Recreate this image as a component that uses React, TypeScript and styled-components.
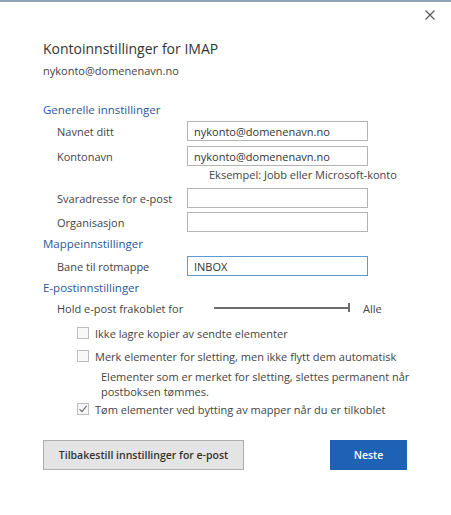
import { createGlobalStyle } from "styled-components";
import styled from "styled-components";

const GlobalStyle = createGlobalStyle`
    html, body {
        margin: 0;
        padding: 0;
        background: #fff;
    }
    body {
        font-family: "Open Sans", "Liberation Sans", sans-serif;
        color: #444;
    }
`;

const Dialog = styled.div`
    width: 451px;
    height: 515px;
    box-sizing: border-box;
    border-top: 2px solid #8ea3b8;
    background: #fff;
    display: flex;
    flex-direction: column;
`;

const TopBar = styled.div`
    height: 26px;
    display: flex;
    align-items: center;
    justify-content: flex-end;
    padding-right: 16px;
`;

const CloseButton = styled.button`
    width: 10px;
    height: 10px;
    padding: 0;
    border: 0;
    background: none;
    display: flex;
    cursor: pointer;
`;

const Body = styled.div`
    padding: 0 43px;
    display: flex;
    flex-direction: column;
    white-space: nowrap;
`;

const Title = styled.h1`
    margin: 11px 0 0;
    font-size: 14px;
    line-height: 20px;
    font-weight: 400;
    color: #333;
`;

const Account = styled.div`
    margin-top: 4px;
    font-size: 11px;
    line-height: 16px;
    color: #444;
`;

const SectionTitle = styled.h2<{ $gap: number }>`
    margin: ${({ $gap }) => $gap}px 0 0;
    font-size: 11.5px;
    line-height: 16px;
    font-weight: 400;
    color: #2b5797;
`;

const FieldRow = styled.label<{ $gap: number }>`
    margin-top: ${({ $gap }) => $gap}px;
    padding-left: 14px;
    display: grid;
    grid-template-columns: 130px 181px;
    align-items: center;
    height: 20px;
    font-size: 11px;
`;

const TextInput = styled.input<{ $focused?: boolean }>`
    box-sizing: border-box;
    width: 181px;
    height: 20px;
    padding: 0 6px;
    border: 1px solid ${({ $focused }) => ($focused ? "#5a9bd5" : "#b4b4b4")};
    font-family: inherit;
    font-size: 11px;
    color: #333;
    outline: none;
    background: #fff;
`;

const Hint = styled.div`
    margin-top: 1px;
    padding-left: 166px;
    font-size: 11px;
    line-height: 16px;
    color: #444;
`;

const SliderRow = styled.div`
    margin-top: 2px;
    padding-left: 14px;
    height: 20px;
    display: flex;
    align-items: center;
    font-size: 11px;
`;

const SliderLabel = styled.span`
    width: 157px;
`;

const Track = styled.div`
    position: relative;
    width: 136px;
    height: 2px;
    background: #6d6d6d;
    margin-right: 13px;
`;

const Thumb = styled.span`
    position: absolute;
    right: 0;
    top: -4px;
    width: 2px;
    height: 9px;
    background: #6d6d6d;
`;

const CheckRow = styled.label<{ $gap: number }>`
    margin-top: ${({ $gap }) => $gap}px;
    padding-left: 34px;
    height: 20px;
    display: flex;
    align-items: center;
    gap: 6px;
    font-size: 11px;
`;

const Box = styled.span`
    box-sizing: border-box;
    width: 12px;
    height: 12px;
    border: 1px solid #bcbcbc;
    background: #f8f8f8;
    display: flex;
    align-items: center;
    justify-content: center;
    flex: none;
`;

const Note = styled.p`
    margin: 3px 0 0;
    padding-left: 58px;
    font-size: 11px;
    line-height: 15px;
    color: #444;
`;

const Footer = styled.div`
    margin-top: 21px;
    display: flex;
    justify-content: space-between;
    padding-right: 1px;
`;

const Button = styled.button<{ $primary?: boolean }>`
    height: 30px;
    box-sizing: border-box;
    padding: 0;
    width: ${({ $primary }) => ($primary ? "77px" : "201px")};
    border: 1px solid ${({ $primary }) => ($primary ? "#1d62b5" : "#adadad")};
    background: ${({ $primary }) => ($primary ? "#1d62b5" : "#e4e4e4")};
    color: ${({ $primary }) => ($primary ? "#fff" : "#333")};
    font-family: inherit;
    font-size: 10.5px;
    font-weight: 600;
    cursor: pointer;
`;

function Check({ checked }: { checked?: boolean }) {
	return (
		<Box>
			{checked ? (
				<svg width="10" height="10" viewBox="0 0 10 10">
					<path d="M1.5 5.2 L4 7.6 L8.6 1.8" fill="none" stroke="#6b6b6b" strokeWidth="1.1" />
				</svg>
			) : null}
		</Box>
	);
}

export default function App() {
	return (
		<>
			<GlobalStyle />
			<Dialog>
				<TopBar>
					<CloseButton aria-label="Lukk">
						<svg width="10" height="10" viewBox="0 0 10 10">
							<path d="M0.5 0.5 L9.5 9.5 M9.5 0.5 L0.5 9.5" stroke="#555" strokeWidth="1.1" />
						</svg>
					</CloseButton>
				</TopBar>
				<Body>
					<Title>Kontoinnstillinger for IMAP</Title>
					<Account>nykonto@domenenavn.no</Account>

					<SectionTitle $gap={23}>Generelle innstillinger</SectionTitle>
					<FieldRow $gap={3}>
						<span>Navnet ditt</span>
						<TextInput defaultValue="nykonto@domenenavn.no" />
					</FieldRow>
					<FieldRow $gap={5}>
						<span>Kontonavn</span>
						<TextInput defaultValue="nykonto@domenenavn.no" />
					</FieldRow>
					<Hint>Eksempel: Jobb eller Microsoft-konto</Hint>
					<FieldRow $gap={5}>
						<span>Svaradresse for e-post</span>
						<TextInput />
					</FieldRow>
					<FieldRow $gap={4}>
						<span>Organisasjon</span>
						<TextInput />
					</FieldRow>

					<SectionTitle $gap={4}>Mappeinnstillinger</SectionTitle>
					<FieldRow $gap={4}>
						<span>Bane til rotmappe</span>
						<TextInput $focused defaultValue="INBOX" />
					</FieldRow>

					<SectionTitle $gap={4}>E-postinnstillinger</SectionTitle>
					<SliderRow>
						<SliderLabel>Hold e-post frakoblet for</SliderLabel>
						<Track>
							<Thumb />
						</Track>
						<span>Alle</span>
					</SliderRow>
					<CheckRow $gap={5}>
						<Check />
						Ikke lagre kopier av sendte elementer
					</CheckRow>
					<CheckRow $gap={3}>
						<Check />
						Merk elementer for sletting, men ikke flytt dem automatisk
					</CheckRow>
					<Note>
						Elementer som er merket for sletting, slettes permanent når
						<br />
						postboksen tømmes.
					</Note>
					<CheckRow $gap={0}>
						<Check checked />
						Tøm elementer ved bytting av mapper når du er tilkoblet
					</CheckRow>

					<Footer>
						<Button>Tilbakestill innstillinger for e-post</Button>
						<Button $primary>Neste</Button>
					</Footer>
				</Body>
			</Dialog>
		</>
	);
}
